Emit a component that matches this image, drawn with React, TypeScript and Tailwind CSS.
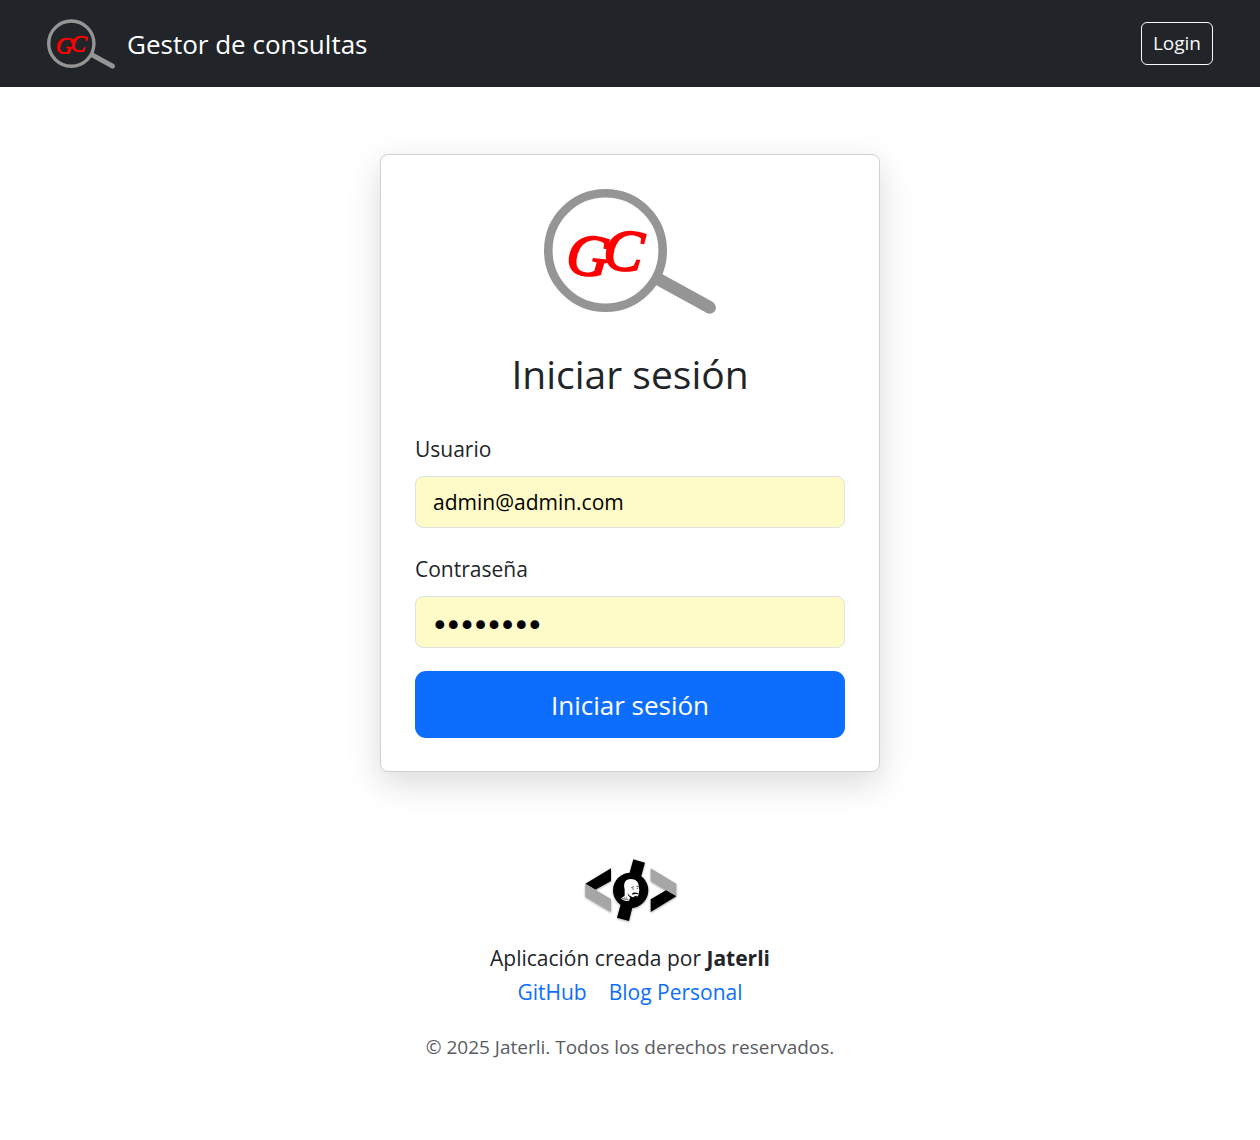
import { useState } from "react";

function SearchLogo({ className, title }: { className: string; title: string }) {
  return (
    <svg viewBox="0 0 172 125" className={className} role="img" aria-label={title}>
      <circle cx="61.5" cy="61.5" r="57.2" fill="none" stroke="#959595" strokeWidth="8.6" />
      <path d="M114 90 L166 118.5" stroke="#959595" strokeWidth="12.5" />
      <circle cx="165.7" cy="118.6" r="6.2" fill="#959595" />
      <text
        x="21 58"
        y="84 79"
        rotate="6"
        fontSize="59"
        fontStyle="italic"
        fill="#ff0000"
        stroke="#ff0000"
        strokeWidth="2"
        fontFamily="'Brush Script MT', 'Liberation Serif', cursive"
      >
        GC
      </text>
    </svg>
  );
}

function AuthorLogo() {
  return (
    <svg
      viewBox="42 24 282 192"
      className="h-16 w-[94px] drop-shadow-[0_1px_1px_rgba(0,0,0,0.35)]"
      role="img"
      aria-label="Jaterli"
    >
      <path d="M49 101 L126 55 L126 93 L79 119 Z" fill="#000" />
      <path d="M49 101 L126 147 L126 186 L49 140 Z" fill="#a6a6a6" />
      <path d="M245 55 L322 101 L322 140 L245 93 Z" fill="#a6a6a6" />
      <path d="M291 121 L322 139 L245 186 L245 148 Z" fill="#000" />
      <path d="M193 28 L228 38 L215 85 L179 79 Z" fill="#000" />
      <path d="M157 156 L192 165 L180 213 L144 203 Z" fill="#000" />
      <circle cx="185" cy="121" r="53" fill="#000" />
      <path
        d="M167 118 C162 98 170 87 185 87 C201 87 210 97 209 110 L211 120 L208 136 C203 145 192 148 184 142 L180 152 C171 155 162 152 156 145 L167 137 Z"
        fill="#fff"
      />
      <path
        d="M187 113 L195 110 M202 109 L208 109 M190 117 L195 117 M203 115 L207 115"
        fill="none"
        stroke="#000"
        strokeWidth="2"
      />
      <path
        d="M189 131 C194 126 200 127 208 130 L207 133 L200 131 L190 134 Z"
        fill="#000"
      />
      <path
        d="M175 130 L183 138 L192 142 L200 137 C206 136 205 144 198 146 C187 148 178 142 175 130 Z"
        fill="#000"
      />
      <path
        d="M160 141 L164 148 M166 140 L169 150 M172 140 L175 151 M158 146 L179 149"
        fill="none"
        stroke="#333"
        strokeWidth="1.5"
      />
    </svg>
  );
}

const inputClass =
  "h-[52px] w-full rounded-lg border border-[#dee2e6] bg-[#fffbc8] px-[17px] text-black outline-none focus:ring-4 focus:ring-[#0d6efd]/25";

export default function App() {
  const [user, setUser] = useState("admin@admin.com");
  const [password, setPassword] = useState("password");

  return (
    <div className="min-h-screen bg-white font-['Segoe_UI','Open_Sans',sans-serif] text-[21px] leading-[34px] text-[#212529]">
      <header className="bg-[#212529]">
        <nav className="flex min-h-[87px] items-center justify-between px-[47px]">
          <a href="#" className="flex items-center gap-3 text-[26px] text-white">
            <SearchLogo className="h-[50px] w-[68px]" title="Gestor de consultas" />
            <span>Gestor de consultas</span>
          </a>
          <a
            href="#login"
            className="rounded-md border border-[#f8f9fa] px-[11px] py-1 text-[19px] leading-[33px] text-[#f8f9fa]"
          >
            Login
          </a>
        </nav>
      </header>

      <main className="px-4 pt-[67px]">
        <section className="mx-auto w-full max-w-[500px] rounded-lg border border-[#d0d1d2] bg-white px-[34px] pt-[34px] pb-[33px] shadow-[0_11px_34px_rgba(0,0,0,0.15)]">
          <SearchLogo className="mx-auto h-[125px] w-[172px]" title="Logo" />
          <h1 className="mt-9 mb-[34px] text-center text-[39px] leading-[48px]">Iniciar sesión</h1>
          <form onSubmit={(e) => e.preventDefault()}>
            <div className="mb-6">
              <label htmlFor="user" className="mb-[10px] block">
                Usuario
              </label>
              <input
                id="user"
                type="email"
                value={user}
                onChange={(e) => setUser(e.target.value)}
                className={inputClass}
              />
            </div>
            <div className="mb-[23px]">
              <label htmlFor="password" className="mb-[10px] block">
                Contraseña
              </label>
              <input
                id="password"
                type="password"
                value={password}
                onChange={(e) => setPassword(e.target.value)}
                className={`${inputClass} pt-[6px] font-['DejaVu_Sans',sans-serif] text-[23px] [-webkit-text-stroke:2px_black]`}
              />
            </div>
            <button
              type="submit"
              className="h-[67px] w-full cursor-pointer rounded-[11px] bg-[#0d6efd] text-[26px] text-white"
            >
              Iniciar sesión
            </button>
          </form>
        </section>
      </main>

      <footer className="flex flex-col items-center px-4 pt-[86px] pb-12 text-center">
        <AuthorLogo />
        <p className="mt-[19px]">
          Aplicación creada por <strong className="font-bold">Jaterli</strong>
        </p>
        <div className="flex gap-[22px] text-[#0d6efd]">
          <a href="#github">GitHub</a>
          <a href="#blog">Blog Personal</a>
        </div>
        <p className="mt-[21px] text-[19px] text-[#595c5f]">
          © 2025 Jaterli. Todos los derechos reservados.
        </p>
      </footer>
    </div>
  );
}
